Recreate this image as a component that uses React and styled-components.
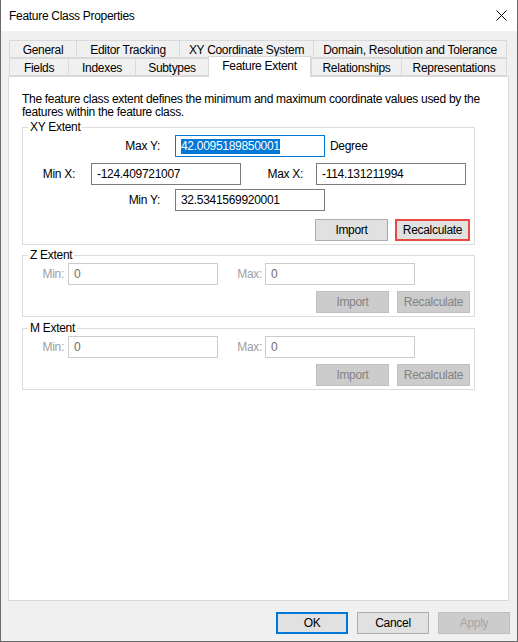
import React from 'react'
import styled, { createGlobalStyle } from 'styled-components'

const GlobalStyle = createGlobalStyle`
  html, body {
    margin: 0;
    padding: 0;
    background: #f0f0f0;
  }
  body {
    font-family: "Liberation Sans", Arial, sans-serif;
    font-size: 12px;
    letter-spacing: -0.3px;
    color: #000;
  }
`

const Window = styled.div`
  width: 518px;
  height: 642px;
  box-sizing: border-box;
  border: 1px solid #6a6a6a;
  border-top: none;
  display: flex;
  flex-direction: column;
  background: #f0f0f0;
`

const TitleBar = styled.div`
  height: 31px;
  flex-shrink: 0;
  background: #ffffff;
  display: flex;
  align-items: center;
  justify-content: space-between;
  padding: 0 10px 0 8px;
  font-size: 12px;
`

const Body = styled.div`
  flex: 1;
  display: flex;
  flex-direction: column;
  padding: 9px 8px 7px 7px;
  min-height: 0;
`

const TabRow = styled.div`
  display: flex;
  align-items: flex-end;
  height: 18px;
  margin-left: 1px;
`

const Tab = styled.div`
  box-sizing: border-box;
  width: ${p => p.w}px;
  height: ${p => (p.active ? 21 : 18)}px;
  margin-bottom: ${p => (p.active ? -1 : 0)}px;
  border: 1px solid #d9d9d9;
  border-bottom: ${p => (p.active ? 'none' : '1px solid #d9d9d9')};
  border-right: ${p => (p.last || p.active ? '1px solid #d9d9d9' : 'none')};
  background: ${p => (p.active ? '#ffffff' : '#f0f0f0')};
  display: flex;
  align-items: center;
  justify-content: center;
  padding-top: ${p => (p.active ? 0 : 1)}px;
  padding-bottom: ${p => (p.active ? 3 : 0)}px;
  position: relative;
  z-index: ${p => (p.active ? 2 : 1)};
  white-space: nowrap;
`

const Panel = styled.div`
  flex: 1;
  background: #ffffff;
  border: 1px solid #d9d9d9;
  padding: 16px 0 0 13px;
  display: flex;
  flex-direction: column;
  align-items: flex-start;
`

const Description = styled.p`
  margin: 0 0 1px;
  line-height: 13px;
`

const Group = styled.fieldset`
  width: 453px;
  box-sizing: border-box;
  margin: ${p => p.mt || 0}px 0 0;
  padding: 0 4px 3px 0;
  border: 1px solid #dcdcdc;
  min-width: 0;
  display: flex;
  flex-direction: column;
`

const Legend = styled.legend`
  padding: 0 2px;
  margin-left: 5px;
  line-height: 14px;
`

const Row = styled.div`
  display: flex;
  align-items: center;
  margin-top: ${p => p.mt || 0}px;
`

const Label = styled.div`
  width: ${p => p.w}px;
  margin-right: ${p => p.gap}px;
  text-align: right;
  color: ${p => (p.disabled ? '#a0a0a0' : '#000')};
  white-space: nowrap;
`

const TextBox = styled.div`
  box-sizing: border-box;
  width: 150px;
  height: 22px;
  border: 1px solid ${p => (p.focused ? '#0078d7' : p.disabled ? '#cccccc' : '#7a7a7a')};
  background: #ffffff;
  color: ${p => (p.disabled ? '#6d6d6d' : '#000')};
  display: flex;
  align-items: center;
  padding-left: 5px;
  white-space: nowrap;
  overflow: hidden;
`

const Selected = styled.span`
  background: #0078d7;
  color: #ffffff;
  line-height: 15px;
`

const Unit = styled.span`
  margin-left: 5px;
`

const ButtonRow = styled.div`
  display: flex;
  justify-content: flex-end;
  gap: ${p => p.gap || 7}px;
  margin-top: ${p => p.mt || 0}px;
`

const Button = styled.div`
  box-sizing: border-box;
  width: ${p => p.w || 73}px;
  height: 22px;
  display: flex;
  align-items: center;
  justify-content: center;
  background: ${p => (p.disabled ? '#cccccc' : '#e1e1e1')};
  border: ${p =>
    p.highlight
      ? '2px solid #e84a43'
      : p.primary
      ? '2px solid #0078d7'
      : p.disabled
      ? '1px solid #bfbfbf'
      : '1px solid #adadad'};
  color: ${p => (p.faint ? '#a6a6a6' : p.disabled ? '#838383' : '#000')};
`

const Footer = styled.div`
  display: flex;
  justify-content: flex-end;
  gap: 9px;
  margin-top: 11px;
  margin-right: -1px;
`

const CloseIcon = () => (
  <svg width='11' height='11' viewBox='0 0 11 11'>
    <path d='M0.5 0.5 L10.5 10.5 M10.5 0.5 L0.5 10.5' stroke='#000' strokeWidth='1' fill='none' />
  </svg>
)

const topTabs = [
  { name: 'General', w: 67 },
  { name: 'Editor Tracking', w: 103 },
  { name: 'XY Coordinate System', w: 134 },
  { name: 'Domain, Resolution and Tolerance', w: 194 }
]

const bottomTabs = [
  { name: 'Fields', w: 59 },
  { name: 'Indexes', w: 67 },
  { name: 'Subtypes', w: 73 },
  { name: 'Feature Extent', w: 103, active: true },
  { name: 'Relationships', w: 90 },
  { name: 'Representations', w: 106 }
]

function DisabledExtent({ title, mt }) {
  return (
    <Group mt={mt}>
      <Legend>{title}</Legend>
      <Row mt={1}>
        <Label w={41} gap={4} disabled>Min:</Label>
        <TextBox disabled>0</TextBox>
        <Label w={44} gap={3} disabled>Max:</Label>
        <TextBox disabled>0</TextBox>
      </Row>
      <ButtonRow mt={6} gap={8}>
        <Button disabled>Import</Button>
        <Button disabled>Recalculate</Button>
      </ButtonRow>
    </Group>
  )
}

export default function App() {
  return (
    <>
      <GlobalStyle />
      <Window>
        <TitleBar>
          <span>Feature Class Properties</span>
          <CloseIcon />
        </TitleBar>
        <Body>
          <TabRow>
            {topTabs.map((t, i) => (
              <Tab key={t.name} w={t.w} last={i === topTabs.length - 1}>{t.name}</Tab>
            ))}
          </TabRow>
          <TabRow>
            {bottomTabs.map((t, i) => (
              <Tab key={t.name} w={t.w} active={t.active} last={i === bottomTabs.length - 1}>{t.name}</Tab>
            ))}
          </TabRow>
          <Panel>
            <Description>
              The feature class extent defines the minimum and maximum coordinate values used by the
              <br />
              features within the feature class.
            </Description>
            <Group>
              <Legend>XY Extent</Legend>
              <Row mt={1}>
                <Label w={137} gap={15}>Max Y:</Label>
                <TextBox focused><Selected>42.0095189850001</Selected></TextBox>
                <Unit>Degree</Unit>
              </Row>
              <Row mt={6}>
                <Label w={52} gap={16}>Min X:</Label>
                <TextBox>-124.409721007</TextBox>
                <Label w={62} gap={13}>Max X:</Label>
                <TextBox>-114.131211994</TextBox>
              </Row>
              <Row mt={4}>
                <Label w={137} gap={15}>Min Y:</Label>
                <TextBox>32.5341569920001</TextBox>
              </Row>
              <ButtonRow mt={8}>
                <Button>Import</Button>
                <Button w={75} highlight>Recalculate</Button>
              </ButtonRow>
            </Group>
            <DisabledExtent title='Z Extent' mt={3} />
            <DisabledExtent title='M Extent' mt={4} />
          </Panel>
          <Footer>
            <Button w={72} primary>OK</Button>
            <Button w={72}>Cancel</Button>
            <Button w={72} disabled faint>Apply</Button>
          </Footer>
        </Body>
      </Window>
    </>
  )
}
